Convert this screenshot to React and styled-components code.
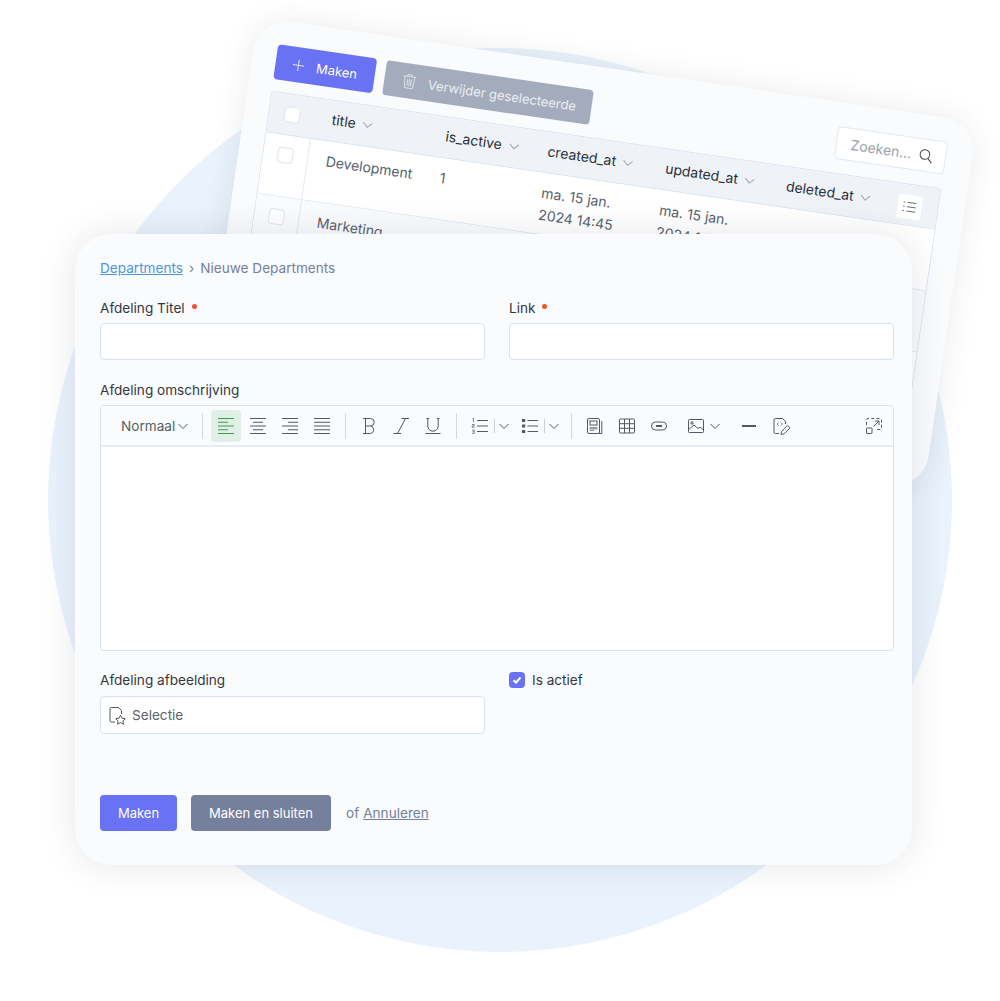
import React from 'react';
import styled, { createGlobalStyle } from 'styled-components';

const GlobalStyle = createGlobalStyle`
  html, body {
    margin: 0;
    padding: 0;
    background: #fff;
    font-family: Inter, "Liberation Sans", sans-serif;
  }
  * { box-sizing: border-box; }
`;

const Stage = styled.div`
  position: relative;
  width: 1000px;
  height: 1001px;
  padding: 234px 0 0 75px;
  overflow: hidden;
`;

const Circle = styled.div`
  position: absolute;
  left: 48px;
  top: 48px;
  width: 904px;
  height: 904px;
  border-radius: 50%;
  background: #eaf2fc;
`;

/* tilted table card behind the form */
const BackCard = styled.div`
  position: absolute;
  left: 258px;
  top: 17px;
  width: 727px;
  height: 372px;
  padding: 24px 26px 0 24px;
  border-radius: 34px;
  background: #f9fbfd;
  box-shadow: 0 0 30px rgba(30, 40, 60, 0.09);
  transform: rotate(8.3deg);
  transform-origin: 0 0;
  overflow: hidden;
`;

const BackToolbar = styled.div`
  display: flex;
  align-items: flex-start;
  gap: 10px;
  height: 35px;
  margin-bottom: 12px;
`;

const ActionButton = styled.div`
  display: flex;
  align-items: center;
  gap: 10px;
  width: ${(p) => p.$width}px;
  height: 35px;
  padding-left: ${(p) => p.$inset}px;
  border-radius: 4px;
  background: ${(p) => p.$bg};
  color: ${(p) => p.$color};
  font-size: 13px;
`;

const SearchBox = styled.div`
  display: flex;
  align-items: center;
  justify-content: space-between;
  width: 111px;
  height: 33px;
  margin-left: auto;
  padding: 0 11px 0 14px;
  border: 1px solid #e2e9f2;
  border-radius: 4px;
  background: #fff;
  color: #9aa1ab;
  font-size: 14px;
`;

const Table = styled.div`
  border: 1px solid #d9e3ef;
  border-radius: 4px 4px 0 0;
  background: #fff;
`;

const columns = '45px 115px 103px 119px 122px 1fr';

const HeadRow = styled.div`
  display: grid;
  grid-template-columns: ${columns};
  align-items: center;
  height: 41px;
  background: #eff3f8;
  border-bottom: 1px solid #d9e3ef;
`;

const HeadCell = styled.div`
  display: flex;
  align-items: center;
  gap: 6px;
  padding: 0 0 3px 18px;
  color: #2b3038;
  font-size: 14px;
`;

const BodyRow = styled.div`
  display: grid;
  grid-template-columns: ${columns};
  height: 62px;
  background: ${(p) => (p.$alt ? '#f9fbfd' : '#fff')};
  border-bottom: 1px solid #e3e9f1;
`;

const CheckCell = styled.div`
  display: flex;
  justify-content: center;
  align-items: ${(p) => (p.$head ? 'center' : 'flex-start')};
  padding-top: ${(p) => (p.$head ? 0 : 12)}px;
  border-right: ${(p) => (p.$head ? 'none' : '1px solid #e3e9f1')};
  height: 100%;
`;

const BodyCell = styled.div`
  padding: 9px 0 0 18px;
  color: #59616d;
  font-size: 14px;
  line-height: 22px;
`;

const DateText = styled.div`
  max-width: 90px;
`;

const MiniCheck = styled.div`
  width: 16px;
  height: 16px;
  border: 1px solid #dfe6ef;
  border-radius: 4px;
  background: #fff;
`;

const ColumnsButton = styled.div`
  display: flex;
  align-items: center;
  justify-content: center;
  width: 24px;
  height: 24px;
  margin: 3px 16px 0 auto;
  border-radius: 3px;
  background: #fff;
`;

const LastHead = styled.div`
  display: flex;
  align-items: center;
`;

const FormCard = styled.div`
  position: relative;
  width: 837px;
  height: 631px;
  padding: 24px 18px 0 25px;
  border-radius: 36px;
  background: #f9fbfd;
  box-shadow: 0 0 36px rgba(30, 40, 60, 0.11);
`;

const Breadcrumb = styled.div`
  display: flex;
  align-items: center;
  gap: 6px;
  height: 20px;
  margin-bottom: 20px;
  color: #75809c;
  font-size: 13.6px;
`;

const CrumbLink = styled.a`
  color: #4a97dd;
  text-decoration: underline;
`;

const TwoColumns = styled.div`
  display: grid;
  grid-template-columns: 385px 385px;
  gap: 24px;
`;

const Label = styled.div`
  display: flex;
  gap: 7px;
  height: 20px;
  margin-bottom: 5px;
  color: #33383e;
  font-size: 13.6px;
  line-height: 20px;
`;

const Required = styled.span`
  width: 5px;
  height: 5px;
  margin-top: 6px;
  border-radius: 50%;
  background: #f0532d;
`;

const TextInput = styled.div`
  height: 37px;
  border: 1px solid #d9e3ef;
  border-radius: 4px;
  background: #fff;
`;

const EditorLabel = styled(Label)`
  margin-top: 20px;
`;

const Editor = styled.div`
  height: 246px;
  border: 1px solid #d9e3ef;
  border-radius: 4px;
  background: #fff;
  overflow: hidden;
`;

const EditorBar = styled.div`
  display: flex;
  align-items: center;
  height: 41px;
  padding: 0 4px 0 20px;
  background: #f9fbfd;
  border-bottom: 2px solid #e7edf4;
`;

const StyleSelect = styled.div`
  display: flex;
  align-items: center;
  gap: 2px;
  color: #555f63;
  font-size: 13.6px;
`;

const BarDivider = styled.span`
  width: 1px;
  height: 26px;
  margin: ${(p) => p.$margin ?? '0 8px'};
  background: #d3d9df;
`;

const BarGroup = styled.div`
  display: flex;
  gap: 2px;
`;

const BarButton = styled.div`
  display: flex;
  align-items: center;
  justify-content: center;
  width: ${(p) => p.$width ?? 30}px;
  height: 32px;
  border-radius: 4px;
  background: ${(p) => (p.$active ? '#e0f0e6' : 'transparent')};
`;

const SplitLine = styled.span`
  width: 1px;
  height: 14px;
  margin: 0 3px 0 4px;
  background: #c9d0d6;
`;

const SplitButton = styled(BarButton)`
  justify-content: flex-start;
  padding-left: 5px;
`;

const ImageButton = styled(BarButton)`
  gap: 3px;
  padding-left: 4px;
`;

const ToolGroup = styled(BarGroup)`
  margin-left: 8px;
`;

const ExpandButton = styled(BarButton)`
  margin-left: auto;
`;

const BottomColumns = styled(TwoColumns)`
  margin-top: 19px;
`;

const PickerBox = styled.div`
  display: flex;
  align-items: center;
  gap: 5px;
  height: 38px;
  padding-left: 6px;
  margin-top: 6px;
  border: 1px solid #d9e3ef;
  border-radius: 4px;
  background: #fff;
  color: #5a6368;
  font-size: 13.6px;
`;

const CheckRow = styled.div`
  display: flex;
  align-items: center;
  gap: 7px;
  height: 20px;
  color: #33383e;
  font-size: 13.6px;
`;

const CheckBox = styled.div`
  display: flex;
  align-items: center;
  justify-content: center;
  width: 16px;
  height: 16px;
  border-radius: 4px;
  background: #6872f3;
`;

const Actions = styled.div`
  display: flex;
  align-items: center;
  margin-top: 61px;
  color: #75809c;
  font-size: 13.6px;
`;

const Button = styled.div`
  display: flex;
  align-items: center;
  justify-content: center;
  width: ${(p) => p.$width}px;
  height: 36px;
  margin-right: ${(p) => p.$gap}px;
  border-radius: 4px;
  background: ${(p) => p.$bg};
  color: #fff;
  font-size: 13px;
`;

const CancelLink = styled.a`
  margin-left: 4px;
  color: #75809c;
  text-decoration: underline;
`;

const ICON = '#505a5f';

const Icon = ({ size = 20, box = 20, children, color = ICON, width = 1 }) => (
  <svg width={size} height={size} viewBox={`0 0 ${box} ${box}`} fill="none" stroke={color} strokeWidth={width}>
    {children}
  </svg>
);

const Chevron = ({ color = ICON, size = 12 }) => (
  <svg width={size} height={size} viewBox="0 0 12 12" fill="none" stroke={color} strokeWidth="1">
    <path d="M1.5 4l4.5 4.5L10.5 4" />
  </svg>
);

const AlignIcon = ({ kind, color }) => {
  const rows = {
    left: [[2, 18], [2, 12], [2, 18], [2, 12], [2, 18]],
    center: [[2, 18], [5, 15], [2, 18], [5, 15], [2, 18]],
    right: [[2, 18], [8, 18], [2, 18], [8, 18], [2, 18]],
    justify: [[2, 18], [2, 18], [2, 18], [2, 18], [2, 18]],
  }[kind];
  return (
    <Icon color={color}>
      {rows.map(([a, b], i) => (
        <path key={i} d={`M${a} ${2.5 + i * 3.75}H${b}`} />
      ))}
    </Icon>
  );
};

const BoldIcon = () => (
  <Icon>
    <path d="M4 2.5h7.5a3.7 3.7 0 0 1 0 7.5H6.5M11.5 10a3.8 3.8 0 0 1 0 7.5H4M6.5 2.5v15" />
  </Icon>
);

const ItalicIcon = () => (
  <Icon>
    <path d="M10.5 2.5H18M2.5 17.5H10M14.5 2.5 6.5 17.5" />
  </Icon>
);

const UnderlineIcon = () => (
  <Icon>
    <path d="M3.5 2.5h2.5M14 2.5h2.5M4.8 2.5V10a5.2 5.2 0 0 0 10.4 0V2.5M2.5 17.5h15" />
  </Icon>
);

const OrderedIcon = () => (
  <Icon>
    <path d="M7 4.5h11M7 10h11M7 15.5h11" />
    <path d="M2.5 3l1-.7v4M2 8.5h2.2v1.4H2.2v1.4h2.2M2 14h2.2v3.4H2M2.6 15.7h1.6" strokeWidth=".7" />
  </Icon>
);

const BulletIcon = () => (
  <Icon>
    <path d="M2 3h3.2v3H2zM2 8.5h3.2v3H2zM2 14h3.2v3H2z" fill={ICON} stroke="none" />
    <path d="M7.5 4.5H18M7.5 10H18M7.5 15.5H18" />
  </Icon>
);

const NewsIcon = () => (
  <Icon>
    <rect x="2.5" y="2.5" width="12" height="15" rx="1.5" />
    <path d="M16.8 5v12.5H14" />
    <rect x="5" y="5" width="7" height="4" />
    <path d="M5 11.5h7v1.5H5zM5 14.5h4" fill="#a5abae" stroke="#8f979b" />
  </Icon>
);

const TableIcon = () => (
  <Icon>
    <rect x="2.5" y="3" width="15" height="14" rx="1" />
    <path d="M2.5 7.7h15M2.5 12.3h15M7.5 3v14M12.5 3v14" />
  </Icon>
);

const LinkIcon = () => (
  <Icon>
    <rect x="2.5" y="6" width="15" height="8" rx="4" />
    <path d="M7 10h6" strokeWidth="2" />
  </Icon>
);

const ImageIcon = () => (
  <Icon>
    <rect x="2.5" y="3.5" width="15" height="13" rx=".8" />
    <circle cx="6" cy="7" r="1.2" />
    <path d="M2.5 13.5 8 9l4 3.5 2-1.5 3.5 3" />
  </Icon>
);

const LineIcon = () => (
  <Icon width={2}>
    <path d="M3 10h14" />
  </Icon>
);

const CodeEditIcon = () => (
  <Icon>
    <path d="M8 17.5H4.5a1.5 1.5 0 0 1-1.5-1.5V4a1.5 1.5 0 0 1 1.5-1.5h7l3 3V8" />
    <path d="M7.5 6.5 6 8l1.5 1.5M10 6.5 11.5 8 10 9.5" strokeWidth=".8" />
    <path d="M10 18.5l.6-3 6-6 2.4 2.4-6 6z" />
  </Icon>
);

const ExpandIcon = () => (
  <Icon>
    <rect x="2.5" y="12" width="5.5" height="5.5" rx=".5" />
    <path d="M2.5 9V4a1.5 1.5 0 0 1 1.5-1.5h12A1.5 1.5 0 0 1 17.5 4v8a1.5 1.5 0 0 1-1.5 1.5h-4.5" strokeDasharray="3 2.2" />
    <path d="M9.5 10.5 15 5M11 5h4v4" />
  </Icon>
);

const FileStarIcon = () => (
  <Icon>
    <path d="M8 17H4.2A1.2 1.2 0 0 1 3 15.8V3.7a1.2 1.2 0 0 1 1.2-1.2h7.3l3 3V9" />
    <path d="m13.5 10.2 1.5 3 3.3.5-2.4 2.3.6 3.2-3-1.5-3 1.5.6-3.2-2.4-2.3 3.3-.5z" />
  </Icon>
);

const TrashIcon = () => (
  <Icon size={18} color="#dfe3ea">
    <path d="M3 4.5h14M7.5 4.5V2.5h5v2M4.5 4.5l1 13h9l1-13M8 7.5v7.5M10 7.5v7.5M12 7.5v7.5" />
  </Icon>
);

const PlusIcon = () => (
  <Icon size={16} color="#fff">
    <path d="M10 3v14M3 10h14" />
  </Icon>
);

const SearchIcon = () => (
  <Icon size={16} color="#3f464d" width={1.2}>
    <circle cx="8.5" cy="8.5" r="6" />
    <path d="M13 13l5 5" />
  </Icon>
);

const ColumnsIcon = () => (
  <Icon size={16} color="#4b5458">
    <path d="M7 4.5h11M7 10h11M7 15.5h11M2 4.5h2M2 10h2M2 15.5h2" />
  </Icon>
);

const headers = ['title', 'is_active', 'created_at', 'updated_at', 'deleted_at'];

const rows = [
  { title: 'Development', alt: false },
  { title: 'Marketing', alt: true },
  { title: 'Sales', alt: false },
];

const App = () => (
  <>
    <GlobalStyle />
    <Stage>
      <Circle />
      <BackCard>
        <BackToolbar>
          <ActionButton $width={100} $inset={15} $bg="#6872f3" $color="#fff">
            <PlusIcon />
            <span>Maken</span>
          </ActionButton>
          <ActionButton $width={209} $inset={16} $bg="#a3abbd" $color="#eceef2">
            <TrashIcon />
            <span>Verwijder geselecteerde</span>
          </ActionButton>
          <SearchBox>
            <span>Zoeken...</span>
            <SearchIcon />
          </SearchBox>
        </BackToolbar>
        <Table>
          <HeadRow>
            <CheckCell $head>
              <MiniCheck />
            </CheckCell>
            {headers.slice(0, 4).map((h) => (
              <HeadCell key={h}>
                {h}
                <Chevron color="#9aa3ae" />
              </HeadCell>
            ))}
            <LastHead>
              <HeadCell>
                {headers[4]}
                <Chevron color="#9aa3ae" />
              </HeadCell>
              <ColumnsButton>
                <ColumnsIcon />
              </ColumnsButton>
            </LastHead>
          </HeadRow>
          {rows.map((r) => (
            <BodyRow key={r.title} $alt={r.alt}>
              <CheckCell>
                <MiniCheck />
              </CheckCell>
              <BodyCell>{r.title}</BodyCell>
              <BodyCell>1</BodyCell>
              <BodyCell>
                <DateText>ma. 15 jan. 2024 14:45</DateText>
              </BodyCell>
              <BodyCell>
                <DateText>ma. 15 jan. 2024 14:45</DateText>
              </BodyCell>
              <BodyCell />
            </BodyRow>
          ))}
        </Table>
      </BackCard>

      <FormCard>
        <Breadcrumb>
          <CrumbLink>Departments</CrumbLink>
          <span>›</span>
          <span>Nieuwe Departments</span>
        </Breadcrumb>
        <TwoColumns>
          <div>
            <Label>
              Afdeling Titel
              <Required />
            </Label>
            <TextInput />
          </div>
          <div>
            <Label>
              Link
              <Required />
            </Label>
            <TextInput />
          </div>
        </TwoColumns>

        <EditorLabel>Afdeling omschrijving</EditorLabel>
        <Editor>
          <EditorBar>
            <StyleSelect>
              Normaal
              <Chevron />
            </StyleSelect>
            <BarDivider $margin="0 8px 0 13px" />
            <BarGroup>
              <BarButton $active>
                <AlignIcon kind="left" color="#3f9a52" />
              </BarButton>
              <BarButton>
                <AlignIcon kind="center" />
              </BarButton>
              <BarButton>
                <AlignIcon kind="right" />
              </BarButton>
              <BarButton>
                <AlignIcon kind="justify" />
              </BarButton>
            </BarGroup>
            <BarDivider />
            <BarGroup>
              <BarButton>
                <BoldIcon />
              </BarButton>
              <BarButton>
                <ItalicIcon />
              </BarButton>
              <BarButton>
                <UnderlineIcon />
              </BarButton>
            </BarGroup>
            <BarDivider />
            <BarGroup>
              <SplitButton $width={48}>
                <OrderedIcon />
                <SplitLine />
                <Chevron />
              </SplitButton>
              <SplitButton $width={48}>
                <BulletIcon />
                <SplitLine />
                <Chevron />
              </SplitButton>
            </BarGroup>
            <BarDivider />
            <BarGroup>
              <BarButton>
                <NewsIcon />
              </BarButton>
              <BarButton>
                <TableIcon />
              </BarButton>
              <BarButton>
                <LinkIcon />
              </BarButton>
              <ImageButton $width={50}>
                <ImageIcon />
                <Chevron />
              </ImageButton>
            </BarGroup>
            <ToolGroup>
              <BarButton>
                <LineIcon />
              </BarButton>
              <BarButton>
                <CodeEditIcon />
              </BarButton>
            </ToolGroup>
            <ExpandButton>
              <ExpandIcon />
            </ExpandButton>
          </EditorBar>
        </Editor>

        <BottomColumns>
          <div>
            <Label>Afdeling afbeelding</Label>
            <PickerBox>
              <FileStarIcon />
              Selectie
            </PickerBox>
          </div>
          <CheckRow>
            <CheckBox>
              <svg width="10" height="10" viewBox="0 0 10 10" fill="none" stroke="#fff" strokeWidth="2">
                <path d="M1.5 5.2 4 7.5 8.5 2.5" />
              </svg>
            </CheckBox>
            Is actief
          </CheckRow>
        </BottomColumns>

        <Actions>
          <Button $width={77} $gap={14} $bg="#6872f3">
            Maken
          </Button>
          <Button $width={140} $gap={15} $bg="#75809c">
            Maken en sluiten
          </Button>
          of
          <CancelLink>Annuleren</CancelLink>
        </Actions>
      </FormCard>
    </Stage>
  </>
);

export default App;
